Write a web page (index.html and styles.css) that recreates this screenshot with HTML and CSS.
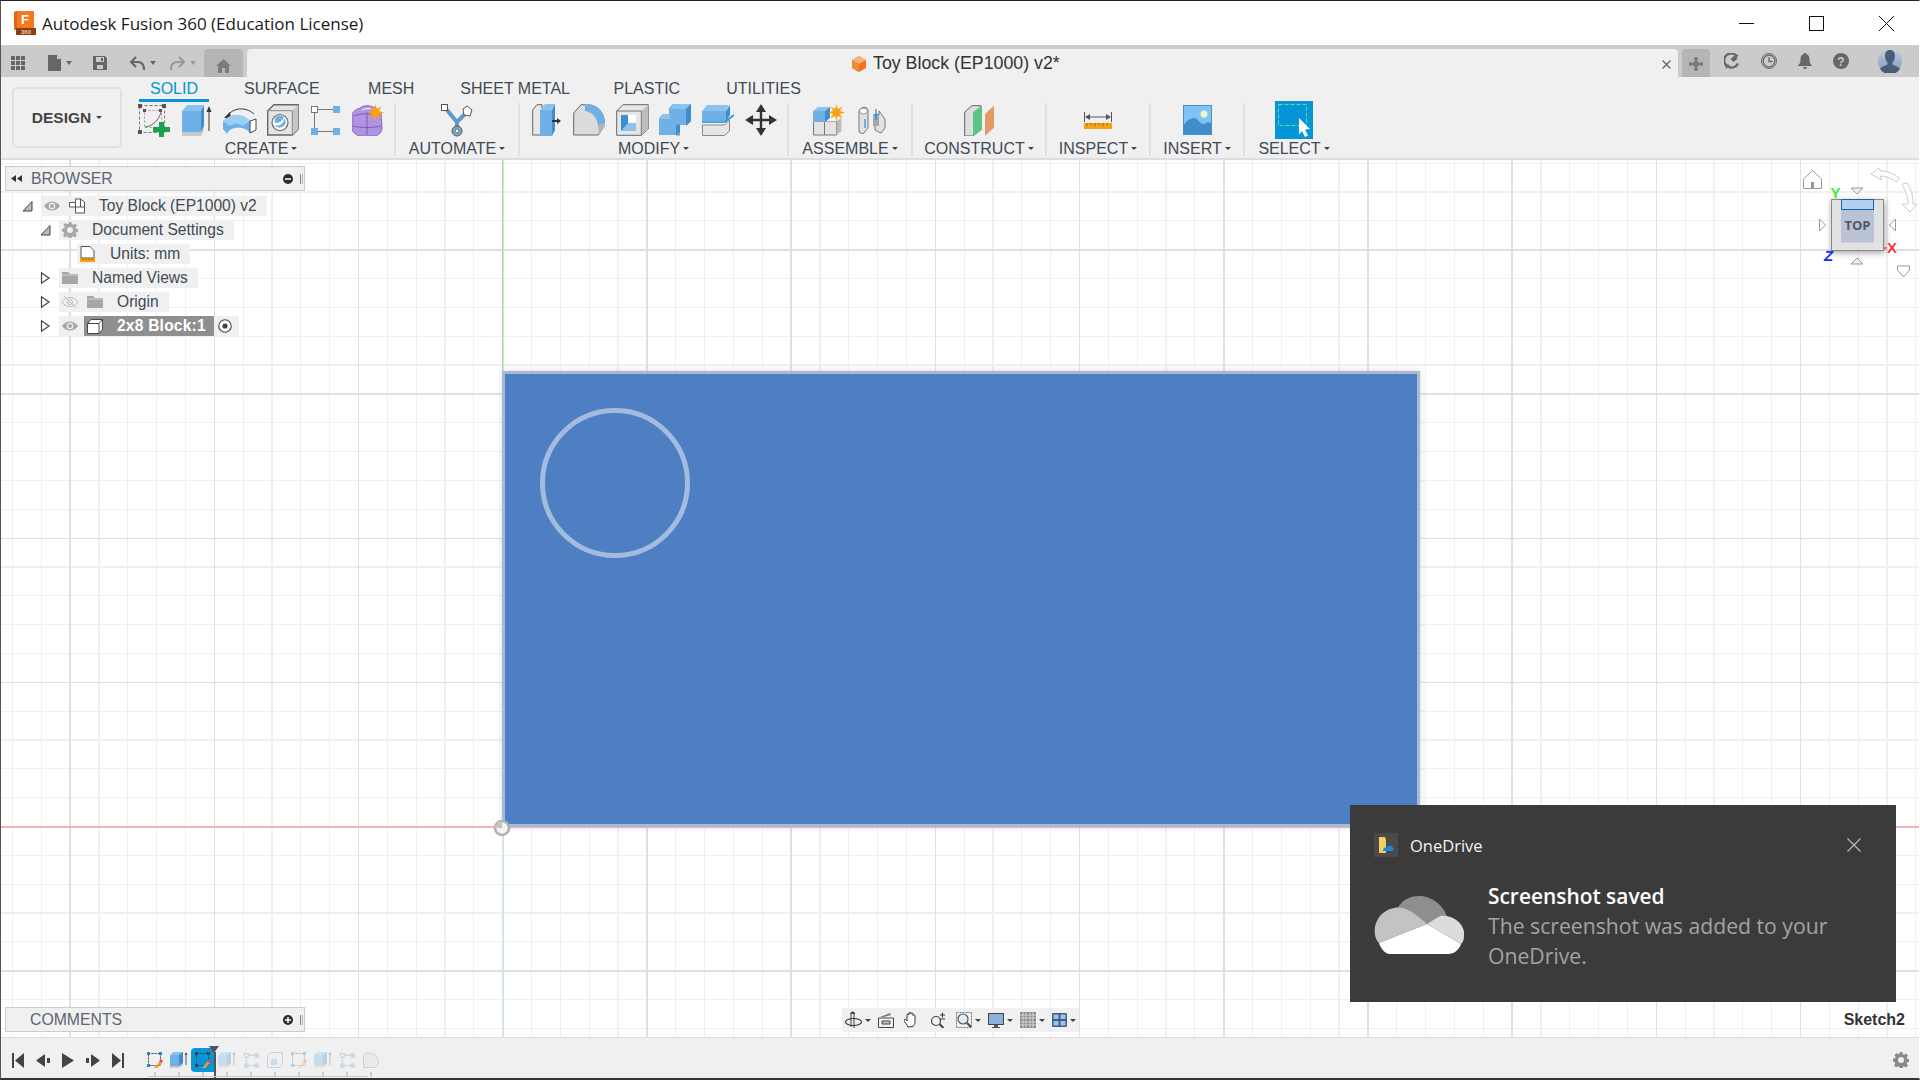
FILE: index.html
```html
<!DOCTYPE html>
<html lang="en">
<head>
    <meta charset="UTF-8">
    <title>Autodesk Fusion 360 (Education License)</title>
    <link rel="stylesheet" href="styles.css">
</head>
<body>
<svg class="defs" width="0" height="0">
    <symbol id="i-sketch" viewBox="0 0 16 16">
        <rect x="1.5" y="1.5" width="12" height="12" fill="none" stroke="currentColor" stroke-dasharray="2 1"/>
        <path d="M0 0h3v3H0zM12 0h3v3h-3zM0 12h3v3H0z" fill="var(--node, #1e88d8)"/>
        <path d="M8 15l5-6 2 2-5 5-3 0z" fill="var(--pen, #f0a030)"/>
        <path d="M12 9l2-2 2 2-2 2z" fill="var(--tip, #e04a4a)"/>
    </symbol>
    <symbol id="i-extrude" viewBox="0 0 18 18">
        <path d="M0 5l4-4h9v12l-4 3H0z" fill="#6fb1e6"/>
        <path d="M0 4l3-3h10l-4 3z" fill="#8cc3ee"/>
        <path d="M9 4l4-3v11l-4 3z" fill="#3f8dcb"/>
        <path d="M0 15h9l4-3v2l-4 3H0z" fill="#c9c9c9"/>
        <path d="M16 2v12" stroke="#555" fill="none"/>
        <path d="M14.500 4L16 1l1.500 3z" fill="#555"/>
    </symbol>
    <symbol id="i-pattern" viewBox="0 0 16 16">
        <path d="M4 2.500h8M2.500 4v8M4 13.500h8" stroke="#777" fill="none"/>
        <rect x="0.500" y="0.500" width="4" height="4" fill="#fff" stroke="#777"/>
        <rect x="11" y="0" width="5" height="5" fill="#6fb1e6"/>
        <rect x="0" y="11" width="5" height="5" fill="#6fb1e6"/>
        <rect x="11" y="11" width="5" height="5" fill="#6fb1e6"/>
    </symbol>
    <symbol id="i-eye" viewBox="0 0 16 10">
        <path d="M0 5c4-6 12-6 16 0-4 6-12 6-16 0z" fill="#a8a8a8"/>
        <circle cx="8" cy="5" r="3.200" fill="#f0f0f0"/>
        <circle cx="8" cy="5" r="2" fill="#a8a8a8"/>
    </symbol>
    <symbol id="i-folder" viewBox="0 0 16 12">
        <path d="M0 0h6l2 2h8v10H0z" fill="#a6a6a6"/>
        <path d="M0 3h16" stroke="#f0f0f0" stroke-width=".6"/>
    </symbol>
    <symbol id="i-tri-open" viewBox="0 0 11 12">
        <path d="M1 11L10 1.500V11z" fill="#bbb" stroke="#444"/>
    </symbol>
    <symbol id="i-tri-closed" viewBox="0 0 11 12">
        <path d="M1.500 .8L9 6l-7.500 5.200z" fill="#fff" stroke="#444" stroke-width="1.200"/>
    </symbol>
    <symbol id="i-gear" viewBox="0 0 16 16">
        <path fill-rule="evenodd" d="M6.600 0h2.800l.4 2.200 1.300.6 1.900-1.300 2 2-1.300 1.900.6 1.300 2.200.4v2.800l-2.200.4-.6 1.300 1.300 1.900-2 2-1.900-1.300-1.300.6-.4 2.200H6.600l-.4-2.200-1.300-.6-1.900 1.300-2-2 1.300-1.900-.6-1.300L0 9.400V6.600l2.200-.4.6-1.300L1.500 3l2-2 1.900 1.300 1.300-.6zM8 5a3 3 0 100 6 3 3 0 000-6z"/>
    </symbol>
    <symbol id="i-star" viewBox="0 0 16 16">
        <polygon points="16,8 11.200,9.300 13.700,13.700 9.300,11.200 8,16 6.700,11.200 2.300,13.700 4.800,9.300 0,8 4.800,6.700 2.300,2.300 6.700,4.800 8,0 9.300,4.800 13.700,2.300 11.200,6.700" fill="#f5a314"/>
    </symbol>
</svg>

<div class="app">
    <header class="titlebar">
        <svg class="app-logo" width="22" height="24" viewBox="0 0 22 24">
            <path d="M2 0h18v18H0V2a2 2 0 012-2z" fill="#f47a20"/>
            <path d="M0 2v17l3 0V0z" fill="#e2661a"/>
            <path d="M2 17h20v7H2z" fill="#8a3f16"/>
            <text x="11" y="13" class="logo-f">F</text>
            <text x="12" y="23" class="logo-360">360</text>
        </svg>
        <span class="app-name">Autodesk Fusion 360 (Education License)</span>
        <div class="win-buttons">
            <svg width="15" height="15" viewBox="0 0 15 15"><path d="M0 7.500h15" stroke="#111"/></svg>
            <svg width="15" height="15" viewBox="0 0 15 15"><rect x=".5" y=".5" width="14" height="14" fill="none" stroke="#111"/></svg>
            <svg width="15" height="15" viewBox="0 0 15 15"><path d="M0 0l15 15M15 0L0 15" stroke="#111"/></svg>
        </div>
    </header>

    <nav class="tabbar">
        <div class="qat">
            <svg width="14" height="14" viewBox="0 0 14 14" fill="#666"><path d="M0 0h4v4H0zM5 0h4v4H5zM10 0h4v4h-4zM0 5h4v4H0zM5 5h4v4H5zM10 5h4v4h-4zM0 10h4v4H0zM5 10h4v4H5zM10 10h4v4h-4z"/></svg>
            <div class="qat-btn">
                <svg width="13" height="16" viewBox="0 0 13 16" fill="#666"><path d="M0 0h9l4 4v12H0z"/><path d="M9 0v4h4z" fill="#cbcbcb"/></svg>
                <i class="caret"></i>
            </div>
            <svg width="14" height="14" viewBox="0 0 14 14"><path d="M0 0h12l2 2v12H0z" fill="#666"/><path d="M3 1h8v5H3zM4 9h6v4H4z" fill="#cbcbcb"/><path d="M8 2h2v3H8z" fill="#666"/></svg>
            <div class="qat-btn">
                <svg width="15" height="15" viewBox="0 0 15 15"><path d="M6 1L1 6l5 5M1 6h7c4 0 6 3 6 8" fill="none" stroke="#666" stroke-width="2.200"/></svg>
                <i class="caret"></i>
            </div>
            <div class="qat-btn faded">
                <svg width="15" height="15" viewBox="0 0 15 15"><path d="M9 1l5 5-5 5M14 6H7C3 6 1 9 1 14" fill="none" stroke="#999" stroke-width="2.200"/></svg>
                <i class="caret light"></i>
            </div>
        </div>
        <div class="home-tab">
            <svg width="15" height="14" viewBox="0 0 15 14" fill="#7c7c7c"><path d="M7.500 0L15 7h-2v7H9V9H6v5H2V7H0z"/></svg>
        </div>
        <div class="doc-tab">
            <div class="doc-name">
                <svg width="14" height="16" viewBox="0 0 14 16"><path d="M7 0l7 4v8l-7 4-7-4V4z" fill="#f37321"/><path d="M7 0l7 4-7 4-7-4z" fill="#f9b27c"/><path d="M0 4l7 4v8l-7-4z" fill="#f08a3c"/></svg>
                <span>Toy Block (EP1000) v2*</span>
            </div>
            <svg class="doc-close" width="9" height="9" viewBox="0 0 9 9"><path d="M.5.5l8 8M8.500.5l-8 8" stroke="#666" stroke-width="1.300"/></svg>
        </div>
        <div class="plus-tab">
            <svg width="14" height="14" viewBox="0 0 14 14"><path d="M7 0v14M0 7h14" stroke="#777" stroke-width="3"/></svg>
        </div>
        <div class="tab-tools">
            <svg width="16" height="16" viewBox="0 0 16 16"><path d="M13 3.500A7 7 0 103 13" fill="none" stroke="#666" stroke-width="2.200"/><path d="M4 13.500a7 7 0 0010-3" fill="none" stroke="#666" stroke-width="2.200"/><path d="M6.500 6l4-3.500 1 1 2-2 1 1-2 2 1 1-2 2-2 1.500z" fill="#666"/><path d="M1 11l5 1-4 4z" fill="#666"/></svg>
            <svg width="16" height="16" viewBox="0 0 16 16"><circle cx="8" cy="8" r="7.500" fill="none" stroke="#666"/><circle cx="8" cy="8" r="5.800" fill="none" stroke="#666" stroke-width="1.300"/><path d="M8 4v4.500h3.500" fill="none" stroke="#666" stroke-width="1.300"/></svg>
            <svg width="14" height="16" viewBox="0 0 14 16" fill="#666"><path d="M7 0c1 0 1.500.6 1.500 1.300C11 2 11.500 4 11.500 7c0 3 1 4 2.500 5.500V13H0v-.5C1.500 11 2.500 10 2.500 7c0-3 .5-5 3-5.700C5.500.6 6 0 7 0z"/><path d="M5 14h4a2 2 0 01-4 0z"/></svg>
            <svg width="16" height="16" viewBox="0 0 16 16"><circle cx="8" cy="8" r="8" fill="#666"/><text x="8" y="12.500" class="help-mark">?</text></svg>
        </div>
        <svg class="avatar" width="24" height="24" viewBox="0 0 24 24">
            <defs><linearGradient id="av" x1="0" y1="0" x2="0" y2="1"><stop offset="0" stop-color="#c0cfe2"/><stop offset="1" stop-color="#7f97b8"/></linearGradient></defs>
            <circle cx="12" cy="12" r="12" fill="url(#av)"/>
            <path d="M12 1c3.500 0 5 2.500 5 6 0 3-1 5-2.500 6.500v2C17 17 21 18 22 20a12 12 0 01-20 0c1-2 5-3 7.500-4.500v-2C8 12 7 10 7 7c0-3.500 1.500-6 5-6z" fill="#4a5d78"/>
        </svg>
    </nav>

    <section class="ribbon">
        <button class="design-btn">DESIGN<i class="caret dark"></i></button>
        <div class="ribbon-main">
            <div class="ribbon-tabs">
                <span class="rtab active">SOLID</span>
                <span class="rtab rtab-surface">SURFACE</span>
                <span class="rtab">MESH</span>
                <span class="rtab rtab-sheet">SHEET METAL</span>
                <span class="rtab">PLASTIC</span>
                <span class="rtab">UTILITIES</span>
            </div>
            <div class="panels">
                <div class="panel p-create">
                    <div class="tools">
                        <div class="tool">
                            <svg width="32" height="33" viewBox="0 0 32 33">
                                <rect x="1.500" y="1.500" width="25" height="27" fill="none" stroke="#777" stroke-dasharray="3 2"/>
                                <rect x="6.500" y="6.500" width="17" height="17" fill="none" stroke="#999" stroke-dasharray="2 2"/>
                                <path d="M7 23c8-1 14-7 16-15" fill="none" stroke="#666"/>
                                <path d="M0 0h4v4H0zM24 0h4v4h-4zM0 26h4v4H0zM5 5h3v3H5zM21 5h3v3h-3z" fill="#555"/>
                                <path d="M21 18h5v5h6v5h-6v5h-5v-5h-6v-5h6z" fill="#1ba34c"/>
                            </svg>
                        </div>
                        <div class="tool">
                            <svg width="30" height="31" viewBox="0 0 30 31">
                                <path d="M0 6h19v21H0z" fill="#6fb1e6"/>
                                <path d="M0 6l5-6h17l-3 6z" fill="#8cc3ee"/>
                                <path d="M19 6l3-6v21l-3 6z" fill="#3f8dcb"/>
                                <path d="M0 27h19l3-6v4l-3 6H0z" fill="#c9c9c9"/>
                                <path d="M27 4v22" stroke="#333"/>
                                <path d="M24.500 7L27 1l2.500 6z" fill="#333"/>
                            </svg>
                        </div>
                        <div class="tool">
                            <svg width="34" height="28" viewBox="0 0 34 28">
                                <path d="M4 10C10 2 22 0 31 8" fill="none" stroke="#333"/>
                                <path d="M1 12l6-6 1 6z" fill="#333"/>
                                <path d="M0 15c8-8 20-8 27 0v12C22 20 7 20 4 28L0 23z" fill="#6fb1e6"/>
                                <path d="M0 15c8-8 20-8 27 0l-7 5c-5-3-9-3-13 0z" fill="#9ccdf2"/>
                                <path d="M27 15l6-2v11l-6 3z" fill="#fff" stroke="#444"/>
                            </svg>
                        </div>
                        <div class="tool">
                            <svg width="32" height="32" viewBox="0 0 32 32">
                                <path d="M.7 6.700L7 .7h24.300v24.300l-6 6H.7z" fill="#e4e4e4" stroke="#666" stroke-width="1.400"/>
                                <path d="M25.300 6.700l6-6v24.300l-6 6z" fill="#c6c6c6"/>
                                <path d="M.7 6.700h24.600v24.300" fill="none" stroke="#888"/>
                                <circle cx="13" cy="18.500" r="8" fill="#fff" stroke="#666" stroke-width="1.200"/>
                                <path d="M7 21a7 7 0 0011 0c1-2 1-5-1-7 0 6-5 9-10 7z" fill="#6fb1e6"/>
                                <path d="M9 13a7 7 0 018 0c-1 3-4 6-9 6-1-2 0-5 1-6z" fill="#6fb1e6"/>
                            </svg>
                        </div>
                        <div class="tool">
                            <svg width="29" height="29" viewBox="0 0 29 29">
                                <path d="M7 3.500h15M3.500 7v15M7 25.500h15" stroke="#777" fill="none"/>
                                <rect x=".5" y=".5" width="6" height="6" fill="#fff" stroke="#777"/>
                                <rect x="22" y="0" width="7" height="7" fill="#6fb1e6"/>
                                <rect x="0" y="22" width="7" height="7" fill="#6fb1e6"/>
                                <rect x="22" y="22" width="7" height="7" fill="#6fb1e6"/>
                            </svg>
                        </div>
                        <div class="tool">
                            <svg width="33" height="32" viewBox="0 0 33 32">
                                <path d="M8 4c5-4 12-2 15 0l6 5 1 15c0 4-3 8-9 8H10c-6 0-10-4-10-8V12c0-4 3-6 8-8z" fill="#b193e4" stroke="#8a68c4"/>
                                <path d="M2 12c6-3 18-3 26 0M15 8v23M1 22c8 2 20 2 28 0" stroke="#7d5ab8" fill="none"/>
                                <path d="M10 6c4-2 8-2 12 0" fill="none" stroke="#fff"/>
                                <svg x="15" y="0" width="17" height="17"><use href="#i-star"/></svg>
                            </svg>
                        </div>
                    </div>
                    <div class="panel-label">CREATE<i class="caret dark"></i></div>
                </div>
                <div class="panel p-automate">
                    <div class="tools">
                        <div class="tool">
                            <svg width="32" height="33" viewBox="0 0 32 33">
                                <path d="M6 6l9 11M27 7l-10 10M16 16v9" stroke="#5a9bd0" stroke-width="4" fill="none"/>
                                <rect x=".5" y=".5" width="6" height="6" fill="#fff" stroke="#555"/>
                                <path d="M26 2l5 4-2 6-6-1-1-6z" fill="#fff" stroke="#555"/>
                                <circle cx="16" cy="27" r="5" fill="#7fa8c8" stroke="#555"/>
                                <circle cx="16" cy="27" r="1.800" fill="#fff" stroke="#555" stroke-width=".7"/>
                            </svg>
                        </div>
                    </div>
                    <div class="panel-label">AUTOMATE<i class="caret dark"></i></div>
                </div>
                <div class="panel p-modify">
                    <div class="tools">
                        <div class="tool">
                            <svg width="29" height="32" viewBox="0 0 29 32">
                                <path d="M.7 31V6L5 .7h5V31z" fill="#e8e8e8" stroke="#666"/>
                                <path d="M8 6h12v26H8z" fill="#6fb1e6"/>
                                <path d="M8 6l5-6h10l-3 6z" fill="#8cc3ee"/>
                                <path d="M20 6l3-6v26l-3 6z" fill="#3f8dcb"/>
                                <path d="M20 17h6" stroke="#333" stroke-width="2"/>
                                <path d="M25 14l4 3-4 3z" fill="#333"/>
                            </svg>
                        </div>
                        <div class="tool">
                            <svg width="32" height="32" viewBox="0 0 32 32">
                                <path d="M.7 31V9L8 .7h6C24 .7 31 8 31.300 18v4l-6 9z" fill="#dcdcdc" stroke="#666"/>
                                <path d="M12 1c9-1 20 7 20 19l-7 3c0-8-6-14-13-15z" fill="#6fb1e6" transform="translate(0 -1)"/>
                                <path d="M25 22l7-3v3l-6 9z" fill="#b5b5b5"/>
                            </svg>
                        </div>
                        <div class="tool">
                            <svg width="33" height="32" viewBox="0 0 33 32">
                                <path d="M.7 7L7 .7h25.300V25l-7 6.300H.7z" fill="#e6e6e6" stroke="#666"/>
                                <path d="M25.300 7l7-6.300V25l-7 6.300z" fill="#bdbdbd"/>
                                <path d="M.7 7h24.600v24" fill="none" stroke="#777"/>
                                <path d="M5 11h15v16H5z" fill="#8cc3ee"/>
                                <path d="M5 11h7v8H5zM5 19h7l-7 8z" fill="#3f8dcb"/>
                                <path d="M12 11h8v8h-8z" fill="#fff"/>
                            </svg>
                        </div>
                        <div class="tool">
                            <svg width="32" height="32" viewBox="0 0 32 32">
                                <path d="M10 4l4-4h18v17l-4 4H21v11l-4-1H0V14l4-4h6z" fill="#6fb1e6"/>
                                <path d="M11 5l4-5h17l-5 5zM0 15l4-5h7v5z" fill="#8cc3ee"/>
                                <path d="M27 5l5-5v17l-5 5zM17 21l4-1v8l-4 4z" fill="#3f8dcb"/>
                            </svg>
                        </div>
                        <div class="tool">
                            <svg width="32" height="31" viewBox="0 0 32 31">
                                <path d="M0 6h24v10H0z" fill="#6fb1e6"/>
                                <path d="M0 6l5-6h22l-3 6z" fill="#8cc3ee"/>
                                <path d="M24 6l4-6v10l-4 6z" fill="#3f8dcb"/>
                                <path d="M.5 20h22l5-5v11l-5 4.500H.5z" fill="#e6e6e6" stroke="#888"/>
                                <path d="M0 17h23l9-7" fill="none" stroke="#1d8ee0" stroke-width="1.600"/>
                            </svg>
                        </div>
                        <div class="tool">
                            <svg width="32" height="32" viewBox="0 0 32 32">
                                <path d="M16 4v24M4 16h24" stroke="#333" stroke-width="2.400"/>
                                <path d="M16 0l5 8H11zM16 32l-5-8h10zM0 16l8-5v10zM32 16l-8 5V11z" fill="#333"/>
                            </svg>
                        </div>
                    </div>
                    <div class="panel-label">MODIFY<i class="caret dark"></i></div>
                </div>
                <div class="panel p-assemble">
                    <div class="tools">
                        <div class="tool">
                            <svg width="32" height="32" viewBox="0 0 32 32">
                                <path d="M.5 17h11v14H.5zM11.500 17h12v14h-12z" fill="#e4e4e4" stroke="#777"/>
                                <path d="M23.500 31l5-4V14l-5 3z" fill="#bdbdbd"/>
                                <path d="M12 17l5-4h11l-5 4z" fill="#f4f4f4"/>
                                <path d="M0 7h12v11H0z" fill="#6fb1e6"/>
                                <path d="M0 7l5-4h12l-5 4z" fill="#8cc3ee"/>
                                <path d="M12 7l5-4v11l-5 4z" fill="#3f8dcb"/>
                                <svg x="15" y="0" width="17" height="17"><use href="#i-star"/></svg>
                            </svg>
                        </div>
                        <div class="tool">
                            <svg width="28" height="28" viewBox="0 0 28 28">
                                <path d="M1 26V6c0-5 9-7 9-1v17l-5 6z" fill="#e2e2e2" stroke="#777"/>
                                <ellipse cx="5.500" cy="5" rx="4" ry="3" fill="#fff" stroke="#777" stroke-width=".8"/>
                                <path d="M17 8v16l6 3 4-5V13l-6-8v4z" fill="#e2e2e2" stroke="#777"/>
                                <path d="M15 10h6v10h-6z" fill="#a8a8a8"/>
                                <path d="M7 13v9M18 3v11M15 9h6" stroke="#1d8ee0" stroke-width="1.200" fill="none"/>
                            </svg>
                        </div>
                    </div>
                    <div class="panel-label">ASSEMBLE<i class="caret dark"></i></div>
                </div>
                <div class="panel p-construct">
                    <div class="tools">
                        <div class="tool">
                            <svg width="30" height="31" viewBox="0 0 30 31">
                                <path d="M.7 31V7L8 .7h9v24L9 31z" fill="#dedede" stroke="#666"/>
                                <path d="M9 7l9-6.500v24L9 31z" fill="#59c685"/>
                                <path d="M21 9l9-8.500v22L21 31z" fill="#e59a66"/>
                            </svg>
                        </div>
                    </div>
                    <div class="panel-label">CONSTRUCT<i class="caret dark"></i></div>
                </div>
                <div class="panel p-inspect">
                    <div class="tools">
                        <div class="tool">
                            <svg width="28" height="17" viewBox="0 0 28 17">
                                <path d="M.5 0v10M27.500 0v10M2 5h24" stroke="#555" fill="none"/>
                                <path d="M1 5l5-3v6zM27 5l-5-3v6z" fill="#555"/>
                                <path d="M0 11h28v6H0z" fill="#f5a314"/>
                                <path d="M3 11v3M7 11v2M11 11v3M15 11v2M19 11v3M23 11v2" stroke="#a86a00"/>
                            </svg>
                        </div>
                    </div>
                    <div class="panel-label">INSPECT<i class="caret dark"></i></div>
                </div>
                <div class="panel p-insert">
                    <div class="tools">
                        <div class="tool">
                            <svg width="29" height="30" viewBox="0 0 29 30">
                                <rect x=".5" y=".5" width="28" height="29" fill="#7fc4f5" stroke="#4a90c8"/>
                                <circle cx="21" cy="9" r="3.500" fill="#f5f5c8"/>
                                <path d="M1 29V20c3-5 7-7 10-7 4 0 6 6 9 6 3 0 5-3 8-1v11z" fill="#3f8dcb"/>
                            </svg>
                        </div>
                    </div>
                    <div class="panel-label">INSERT<i class="caret dark"></i></div>
                </div>
                <div class="panel p-select">
                    <div class="tools">
                        <div class="select-tool">
                            <svg width="38" height="38" viewBox="0 0 38 38">
                                <rect width="38" height="38" fill="#0696d7"/>
                                <rect x="3.500" y="3.500" width="28" height="21" fill="none" stroke="#5fdc9a" stroke-dasharray="4 2"/>
                                <path d="M24 17l11 11-5 .5 3 6-3 1.500-3-6-3 3.500z" fill="#fff"/>
                            </svg>
                        </div>
                    </div>
                    <div class="panel-label">SELECT<i class="caret dark"></i></div>
                </div>
            </div>
        </div>
    </section>

    <main class="canvas">
        <div class="axis-h"></div>
        <div class="axis-v"></div>
        <div class="sketch-block">
            <div class="sketch-circle"></div>
        </div>
        <svg class="origin" width="20" height="20" viewBox="0 0 20 20">
            <circle cx="10" cy="10" r="7" fill="#f4f4f4" stroke="#b0b0b0" stroke-width="2.500"/>
            <path d="M10 10V3A7 7 0 003 10z" fill="#c4c4c4"/>
        </svg>

        <aside class="browser">
            <div class="panel-head">
                <svg width="11" height="7" viewBox="0 0 11 7" fill="#333"><path d="M5 0v7L0 3.500zM11 0v7L6 3.500z"/></svg>
                <span class="panel-head-title">BROWSER</span>
                <svg class="head-pin" width="10" height="10" viewBox="0 0 10 10"><circle cx="5" cy="5" r="5" fill="#2b2b2b"/><path d="M2 5h6" stroke="#fff" stroke-width="1.500"/></svg>
                <i class="head-grip"></i>
            </div>
            <div class="tree">
                <div class="tree-row lvl-0">
                    <svg class="tri" width="11" height="12"><use href="#i-tri-open"/></svg>
                    <div class="row-body">
                        <svg class="eye" width="16" height="10"><use href="#i-eye"/></svg>
                        <svg class="node-icon" width="16" height="16" viewBox="0 0 16 16"><path d="M.5 4.500h6V1h5l4 3v11h-9V9H.5z" fill="#fff" stroke="#555"/><path d="M6.500 9h9M6.500 4.500V9M11.500 1v8" fill="none" stroke="#555"/></svg>
                        <span>Toy Block (EP1000) v2</span>
                    </div>
                </div>
                <div class="tree-row lvl-1">
                    <svg class="tri" width="11" height="12"><use href="#i-tri-open"/></svg>
                    <div class="row-body">
                        <svg class="node-icon grey-icon" width="16" height="16"><use href="#i-gear"/></svg>
                        <span>Document Settings</span>
                    </div>
                </div>
                <div class="tree-row lvl-2">
                    <span class="tri-space"></span>
                    <div class="row-body">
                        <svg class="node-icon" width="15" height="16" viewBox="0 0 15 16"><path d="M1 .5h9l4 4V12H1z" fill="#fff" stroke="#555"/><path d="M0 12h15v4H0z" fill="#f5a314"/><path d="M3 12v2M6 12v2M9 12v2M12 12v2" stroke="#8a5a00"/></svg>
                        <span>Units: mm</span>
                    </div>
                </div>
                <div class="tree-row lvl-1">
                    <svg class="tri" width="11" height="12"><use href="#i-tri-closed"/></svg>
                    <div class="row-body">
                        <svg class="node-icon" width="16" height="12"><use href="#i-folder"/></svg>
                        <span>Named Views</span>
                    </div>
                </div>
                <div class="tree-row lvl-1">
                    <svg class="tri" width="11" height="12"><use href="#i-tri-closed"/></svg>
                    <div class="row-body">
                        <svg class="eye" width="16" height="12" viewBox="0 0 16 12"><path d="M0 6c4-6 12-6 16 0-4 6-12 6-16 0z" fill="none" stroke="#bbb"/><circle cx="8" cy="6" r="2.500" fill="none" stroke="#bbb"/><path d="M2 0l12 12" stroke="#bbb"/></svg>
                        <svg class="node-icon" width="16" height="12"><use href="#i-folder"/></svg>
                        <span>Origin</span>
                    </div>
                </div>
                <div class="tree-row lvl-1">
                    <svg class="tri" width="11" height="12"><use href="#i-tri-closed"/></svg>
                    <div class="row-body row-active">
                        <svg class="eye-tight" width="16" height="10"><use href="#i-eye"/></svg>
                        <div class="row-selected">
                            <svg class="node-icon" width="16" height="15" viewBox="0 0 16 15"><path d="M.5 4.500L4 .5h11.500v10L12 14.500H.5z" fill="#fff" stroke="#444"/><path d="M.5 4.500H12v10M12 4.500L15.500.5" fill="none" stroke="#444"/></svg>
                            <span>2x8 Block:1</span>
                        </div>
                        <svg class="radio" width="14" height="14" viewBox="0 0 14 14"><circle cx="7" cy="7" r="6.200" fill="#fff" stroke="#444" stroke-width="1.100"/><circle cx="7" cy="7" r="2.600" fill="#444"/></svg>
                    </div>
                </div>
            </div>
        </aside>

        <svg class="viewcube" width="120" height="115" viewBox="0 0 120 115">
            <g fill="#fff" stroke="#999">
                <path d="M3.500 14L12.500 5.500 21.500 14V23.500H3.500z"/>
                <path d="M11 23.500V17h3v6.500z" fill="#999" stroke="none"/>
                <path d="M71 9l8-6 1.500 3c6 0 12 2 19 7l-3 4c-6-4-11-6-16-6l1 4z" stroke="#ccc"/>
                <path d="M102 19l5-1c4 6 6 12 6 21l4 0-7 8-8-8h6c0-7-2-12-6-20z" stroke="#ccc"/>
                <path d="M51 23h12l-6 6z" fill="#eee"/>
                <path d="M19.500 54v12l6-6z" fill="#fff"/>
                <path d="M95.500 54v12l-6-6z" fill="#fff"/>
                <path d="M51 99h12l-6-6z" fill="#eee"/>
                <path d="M97.500 101h12l0 4-6 7-6-7z"/>
            </g>
            <rect class="cube-face" x="31.500" y="34.500" width="52" height="51" fill="#e2e2e2" stroke="#888"/>
            <rect x="41" y="34.500" width="33" height="43" fill="#bac3d3"/>
            <rect x="41.500" y="34.500" width="32" height="10" fill="#b0d2f0" stroke="#1a62b0"/>
            <text x="57.500" y="65" class="cube-top">TOP</text>
            <text x="35.500" y="33" class="axis-y">Y</text>
            <text x="92" y="88" class="axis-x">X</text>
            <path d="M84 83h3" stroke="#f44" stroke-width="1.500"/>
            <text x="28.500" y="96" class="axis-z">Z</text>
        </svg>

        <div class="nav-bar">
            <div class="nav-item">
                <svg width="17" height="18" viewBox="0 0 17 18"><path d="M9 1v16M6 3v13" stroke="#444" fill="none"/><path d="M7.500 0l3 3h-6z" fill="#444"/><ellipse cx="8.500" cy="11" rx="8" ry="3.500" fill="none" stroke="#333" stroke-width="1.100"/></svg>
                <i class="caret dark"></i>
            </div>
            <div class="nav-item">
                <svg width="16" height="16" viewBox="0 0 16 16"><path d="M.5 6h15v9.500H.5z" fill="#f0f0f0" stroke="#444"/><path d="M4 9h8v3H4z" fill="#b8c8dc" stroke="#444"/><path d="M2 5l10-4 1 2-7 2z" fill="#777"/></svg>
            </div>
            <div class="nav-item wide">
                <svg width="16" height="16" viewBox="0 0 16 16"><path d="M4 15c-1-3-4-5-4-7 0-1 2-1 3 1V3c0-1.500 2-1.500 2 0V1c0-1.300 2-1.300 2 0v1c0-1.300 2-1.300 2 0v1.500c0-1.300 2-1 2 .5v6c0 2-1 3-2 4.500z" fill="#fff" stroke="#333"/></svg>
            </div>
            <div class="nav-item wide">
                <svg width="16" height="16" viewBox="0 0 16 16"><circle cx="6" cy="9" r="4.500" fill="#e8f0f8" stroke="#444" stroke-width="1.200"/><path d="M9.500 12l4 4" stroke="#444" stroke-width="2"/><path d="M10 3h5M12.500 .5v5M10 7h5" stroke="#333" fill="none"/></svg>
            </div>
            <div class="nav-item wide">
                <svg width="16" height="16" viewBox="0 0 16 16"><rect x=".5" y=".5" width="15" height="15" fill="none" stroke="#777" stroke-dasharray="2 1"/><circle cx="7" cy="7" r="5" fill="#e4eef6" stroke="#555" stroke-width="1.200"/><path d="M11 11l4 4" stroke="#444" stroke-width="2"/></svg>
                <i class="caret dark"></i>
            </div>
            <div class="nav-item">
                <svg width="16" height="15" viewBox="0 0 16 15"><rect x=".5" y=".5" width="15" height="11" fill="#8eb0dc" stroke="#444"/><path d="M6 12h4v2h2v1H4v-1h2z" fill="#555"/></svg>
                <i class="caret dark"></i>
            </div>
            <div class="nav-item">
                <svg width="16" height="16" viewBox="0 0 16 16"><rect width="16" height="16" fill="#8a8a8a"/><path d="M3 0v16M6 0v16M10 0v16M13 0v16M0 3h16M0 6h16M0 10h16M0 13h16" stroke="#e6e6e6" stroke-width=".8"/></svg>
                <i class="caret dark"></i>
            </div>
            <div class="nav-item">
                <svg width="15" height="14" viewBox="0 0 15 14"><rect width="15" height="14" rx="1" fill="#3f5f8a"/><path d="M1.500 1.500h5v4.500h-5zM8.500 1.500h5v4.500h-5zM1.500 8h5v4.500h-5zM8.500 8h5v4.500h-5z" fill="#9cc0e6"/></svg>
                <i class="caret dark"></i>
            </div>
        </div>

        <div class="comments-panel">
            <span class="panel-head-title">COMMENTS</span>
            <svg class="head-pin" width="10" height="10" viewBox="0 0 10 10"><circle cx="5" cy="5" r="5" fill="#2b2b2b"/><path d="M2 5h6M5 2v6" stroke="#fff" stroke-width="1.500"/></svg>
            <i class="head-grip"></i>
        </div>

        <div class="sketch-name">Sketch2</div>

        <div class="toast">
            <div class="toast-head">
                <div class="toast-app">
                    <svg width="16" height="16" viewBox="0 0 16 16"><path d="M1 0h6l1 3v13H1z" fill="#f2cf62"/><path d="M5 14c0-3 2-4 4-4 1-2 5-2 6 1 1 1 1 3-1 3z" fill="#1e88d8"/></svg>
                </div>
                <span class="toast-name">OneDrive</span>
                <svg class="toast-close" width="14" height="14" viewBox="0 0 14 14"><path d="M.5.5l13 13M13.500.5l-13 13" stroke="#bdbdbd" stroke-width="1.100"/></svg>
            </div>
            <div class="toast-body">
                <svg width="90" height="58" viewBox="0 0 90 58" class="toast-cloud">
                    <path d="M22 16C26 4 36 0 45 0c12 0 24 8 28 21L53 28z" fill="#8e8e8e"/>
                    <path d="M5 47C-3 40-1 16 20 12c10-2 18 3 33 16z" fill="#c3c3c3"/>
                    <path d="M53 28l13-8c12-2 26 8 24 20 0 4-1 6-3 8z" fill="#dcdcdc"/>
                    <path d="M5 47l48-19 34 20c-2 6-7 10-13 10H16c-5 0-9-5-11-11z" fill="#fff"/>
                </svg>
                <div class="toast-text">
                    <div class="toast-title">Screenshot saved</div>
                    <div class="toast-msg">The screenshot was added to your<br>OneDrive.</div>
                </div>
            </div>
        </div>
    </main>

    <footer class="timeline">
        <div class="player">
            <span class="play-btn"><svg width="12" height="15" viewBox="0 0 12 15" fill="#444"><path d="M0 0h2v15H0zM12 0v15L3 7.500z"/></svg></span>
            <span class="play-btn"><svg width="14" height="13" viewBox="0 0 14 13" fill="#444"><path d="M9 0v13L0 6.500zM11 4h3v5h-3z"/></svg></span>
            <span class="play-btn"><svg width="12" height="15" viewBox="0 0 12 15" fill="#444"><path d="M0 0l12 7.500L0 15z"/></svg></span>
            <span class="play-btn"><svg width="14" height="13" viewBox="0 0 14 13" fill="#444"><path d="M5 0v13l9-6.500zM0 4h3v5H0z"/></svg></span>
            <span class="play-btn"><svg width="12" height="15" viewBox="0 0 12 15" fill="#444"><path d="M10 0h2v15h-2zM0 0v15l9-7.500z"/></svg></span>
        </div>
        <div class="track">
            <div class="step"><svg width="16" height="16" class="step-dark"><use href="#i-sketch"/></svg></div>
            <div class="step"><svg width="18" height="18"><use href="#i-extrude"/></svg></div>
            <div class="step current"><svg width="16" height="16" class="step-dark"><use href="#i-sketch"/></svg></div>
            <div class="step off"><svg width="18" height="18"><use href="#i-extrude"/></svg></div>
            <div class="step off"><svg width="15" height="15"><use href="#i-pattern"/></svg></div>
            <div class="step off">
                <svg width="16" height="16" viewBox="0 0 16 16"><path d="M.5 3.500l3-3h12v12l-3 3H.5z" fill="#eee" stroke="#888"/><path d="M4 7h6v6H4z" fill="#6fb1e6"/></svg>
            </div>
            <div class="step off"><svg width="16" height="16" class="step-dark"><use href="#i-sketch"/></svg></div>
            <div class="step off"><svg width="18" height="18"><use href="#i-extrude"/></svg></div>
            <div class="step off"><svg width="15" height="15"><use href="#i-pattern"/></svg></div>
            <div class="step off">
                <svg width="16" height="16" viewBox="0 0 16 16"><path d="M.5 15.500V4L3 1h4c5 0 8 4 8.500 9v2l-3 3.500z" fill="#ddd" stroke="#888"/></svg>
            </div>
            <div class="marker"></div>
        </div>
        <svg class="timeline-gear" width="16" height="16"><use href="#i-gear"/></svg>
    </footer>
</div>
</body>
</html>
```

FILE: styles.css
```css
* {
    box-sizing: border-box;
}
body {
    margin: 0;
    width: 1920px;
    height: 1080px;
    overflow: hidden;
    background: #fff;
    font-family: "Liberation Sans", Arial, sans-serif;
    color: #3f4a55;
}
svg {
    display: block;
    flex: none;
}
.defs {
    position: absolute;
}
.app {
    display: flex;
    flex-direction: column;
    height: 1080px;
    border-top: 1px solid #222;
    border-left: 1px solid #555;
    border-right: 1px solid #fff;
    border-bottom: 2px solid #333;
}
.caret {
    display: block;
    flex: none;
    width: 0;
    height: 0;
    border-left: 3.500px solid transparent;
    border-right: 3.500px solid transparent;
    border-top: 4px solid #666;
}
.caret.light {
    border-top-color: #999;
}
.caret.dark {
    border-left-width: 3px;
    border-right-width: 3px;
    border-top-width: 3px;
    border-top-color: #444;
}

/* title bar */
.titlebar {
    display: flex;
    align-items: center;
    height: 44px;
    padding-left: 13px;
    flex: none;
}
.app-name {
    margin-left: 6px;
    font-family: "Open Sans", sans-serif;
    font-size: 17px;
    color: #1a1a1a;
}
.logo-f {
    font: bold 13px "Liberation Sans", sans-serif;
    fill: #fff;
    text-anchor: middle;
}
.logo-360 {
    font: bold 6px "Liberation Sans", sans-serif;
    fill: #f0c8a0;
    text-anchor: middle;
}
.win-buttons {
    display: flex;
    gap: 55px;
    margin-left: auto;
    padding-right: 25px;
}

/* tab strip */
.tabbar {
    display: flex;
    flex: none;
    height: 32px;
    padding-top: 4px;
    background: #cbcbcb;
}
.qat {
    display: grid;
    grid-template-columns: 37px 45px 37px 40px 33px;
    align-items: center;
    width: 203px;
    padding-left: 10px;
}
.qat-btn {
    display: flex;
    align-items: center;
    gap: 5px;
}
.home-tab {
    display: flex;
    justify-content: center;
    align-items: center;
    width: 39px;
    padding-top: 6px;
    background: #b5b5b5;
    border-radius: 4px 4px 0 0;
}
.doc-tab {
    display: flex;
    align-items: center;
    width: 1431px;
    margin-left: 4px;
    padding: 0 7px 0 605px;
    background: #f0f0f0;
    border-radius: 4px 4px 0 0;
}
.doc-name {
    display: flex;
    align-items: center;
    gap: 7px;
    font-size: 17.800px;
    color: #333;
    margin-top: 1px;
}
.doc-close {
    margin-left: auto;
    margin-top: 2px;
}
.plus-tab {
    display: flex;
    justify-content: center;
    align-items: center;
    width: 28px;
    margin-left: 4px;
    padding-top: 2px;
    background: #b5b5b5;
    border-radius: 4px 4px 0 0;
}
.tab-tools {
    display: flex;
    align-items: center;
    gap: 21px;
    margin-left: 14px;
    margin-top: -4px;
}
.avatar {
    margin-left: 29px;
}

/* ribbon */
.ribbon {
    display: flex;
    flex: none;
    height: 83px;
    padding-left: 11px;
    background: #f0f0f0;
    border-bottom: 2px solid #ddd;
}
.design-btn {
    width: 110px;
    height: 61px;
    margin: 10px 10px 0 0;
    display: flex;
    justify-content: center;
    align-items: center;
    gap: 5px;
    padding: 0;
    background: #f0f0f0;
    border: 2px solid #e0e0e0;
    border-radius: 5px;
    font: bold 15.500px "Liberation Sans", sans-serif;
    color: #444;
}
.ribbon-tabs {
    display: flex;
    gap: 24px;
    height: 26px;
    padding-left: 7px;
}
.rtab {
    height: 25px;
    padding: 0 11px;
    font-size: 16px;
    line-height: 24px;
    white-space: nowrap;
}
.rtab-surface {
    margin-right: 2.500px;
}
.rtab-sheet {
    margin-right: -2.500px;
}
.rtab.active {
    color: #0696d7;
    border-bottom: 3px solid #0696d7;
}
.panels {
    display: flex;
}
.panel {
    display: flex;
    flex-direction: column;
    align-items: center;
    height: 53px;
    border-right: 2px solid #e0e0e0;
}
.p-create { width: 264px; padding-right: 4px; }
.p-automate { width: 124px; }
.p-modify { width: 269px; }
.p-assemble { width: 124px; }
.p-construct { width: 134px; }
.p-inspect { width: 104px; }
.p-insert { width: 94px; }
.p-select { width: 98px; border-right: 0; }
.tools {
    display: flex;
    align-items: center;
    height: 34px;
}
.tool {
    display: flex;
    justify-content: center;
    align-items: center;
    width: 43px;
    height: 34px;
}
.panel-label {
    display: flex;
    align-items: center;
    gap: 3px;
    height: 17px;
    margin-top: 3px;
    font-size: 16px;
    white-space: nowrap;
}

/* canvas and what lies over it */
.canvas {
    position: relative;
    flex: 1;
    overflow: hidden;
    background-color: #fff;
    background-image:
        repeating-linear-gradient(90deg, transparent 0, transparent 68.400px, #e0e0e0 68.400px, #e0e0e0 69.900px, transparent 69.900px, transparent 144.200px),
        repeating-linear-gradient(180deg, transparent 0, transparent 89.200px, #e0e0e0 89.200px, #e0e0e0 90.700px, transparent 90.700px, transparent 144.200px),
        repeating-linear-gradient(90deg, transparent 0, transparent 10.800px, #f0f0f0 10.800px, #f0f0f0 12px, transparent 12px, transparent 28.840px),
        repeating-linear-gradient(180deg, transparent 0, transparent 2.600px, #f0f0f0 2.600px, #f0f0f0 3.800px, transparent 3.800px, transparent 28.840px);
}
.axis-h {
    position: absolute;
    left: 0;
    right: 0;
    top: 666px;
    height: 1.500px;
    background: #f4b4b4;
}
.axis-v {
    position: absolute;
    left: 501px;
    top: 0;
    bottom: 0;
    width: 1px;
    background: linear-gradient(180deg, #84e884 666px, #c8f2c8 666px);
}
.sketch-block {
    position: absolute;
    left: 501px;
    top: 211px;
    width: 918px;
    height: 456px;
    background: #4f7fc3;
    border: 3px solid #a6bbd9;
    border-top-color: #a9b8cc;
    box-shadow: 0 0 6px rgba(190, 190, 200, 0.6);
}
.sketch-circle {
    position: absolute;
    left: 35px;
    top: 34px;
    width: 150px;
    height: 150px;
    border: 5.500px solid #a3bbdf;
    border-radius: 50%;
}
.origin {
    position: absolute;
    left: 491px;
    top: 658px;
}
.browser {
    position: absolute;
    left: 4px;
    top: 6px;
    width: 300px;
}
.panel-head,
.comments-panel {
    display: flex;
    align-items: center;
    height: 25px;
    background: #f0f0f0;
    border: 1px solid #ccc;
    padding-left: 5px;
}
.panel-head-title {
    margin-left: 9px;
    font-size: 15.800px;
    color: #5c6670;
}
.head-pin {
    margin-left: auto;
}
.head-grip {
    display: block;
    width: 3px;
    height: 10px;
    margin: 0 1px 0 7px;
    border-left: 1px solid #888;
    border-right: 1px solid #bbb;
}
.tree {
    padding-top: 5px;
}
.tree-row {
    display: flex;
    align-items: center;
    height: 20px;
    margin-bottom: 4px;
    font-size: 15.600px;
    white-space: nowrap;
}
.lvl-0 { padding-left: 17px; }
.lvl-1 { padding-left: 35px; }
.lvl-2 { padding-left: 53px; }
.tri,
.tri-space {
    width: 11px;
    margin-right: 8px;
}
.row-body {
    display: flex;
    align-items: center;
    height: 20px;
    padding: 0 10px 0 3px;
    background: #f0f0f0;
}
.lvl-2 .node-icon {
    margin-right: 15px;
}
.eye {
    margin-right: 9px;
}
.eye-tight {
    margin-right: 6px;
}
.node-icon {
    margin-right: 14px;
}
.grey-icon {
    fill: #a8a8a8;
}
.row-active {
    padding-right: 7px;
}
.row-selected {
    display: flex;
    align-items: center;
    height: 20px;
    padding: 0 8px 0 3px;
    background: #8f8f8f;
    color: #fff;
    font-weight: bold;
    letter-spacing: 0.200px;
}
.radio {
    margin-left: 4px;
}
.viewcube {
    position: absolute;
    left: 1799px;
    top: 5px;
}
.cube-face {
    filter: drop-shadow(1px 2px 3px rgba(0, 0, 0, 0.35));
}
.cube-top {
    font: bold 13px "Open Sans", sans-serif;
    fill: #4f566a;
    text-anchor: middle;
}
.axis-y {
    font: bold 15px "Liberation Sans", sans-serif;
    fill: #3ee83e;
    text-anchor: middle;
}
.axis-x {
    font: bold 15px "Liberation Sans", sans-serif;
    fill: #ff3b3b;
    text-anchor: middle;
}
.axis-z {
    font: italic bold 15px "Liberation Sans", sans-serif;
    fill: #1a2cf0;
    text-anchor: middle;
}
.help-mark {
    font: bold 12px "Liberation Sans", sans-serif;
    fill: #cbcbcb;
    text-anchor: middle;
}
.nav-bar {
    position: absolute;
    left: 841px;
    bottom: 5px;
    display: flex;
    align-items: center;
    gap: 7px;
    width: 237px;
    height: 24px;
    padding-left: 3px;
    background: #f0f0f0;
}
.nav-item {
    display: flex;
    align-items: center;
    gap: 3px;
}
.nav-item.wide {
    margin-left: 3px;
}
.comments-panel {
    position: absolute;
    left: 4px;
    bottom: 5px;
    width: 300px;
    padding-left: 15px;
}
.sketch-name {
    position: absolute;
    right: 14px;
    bottom: 8px;
    font-size: 16px;
    font-weight: bold;
    color: #333;
}

/* notification */
.toast {
    position: absolute;
    left: 1349px;
    top: 645px;
    width: 546px;
    height: 197px;
    padding: 28px 35px 0 24px;
    background: #3b3b3b;
    font-family: "Open Sans", sans-serif;
}
.toast-head {
    display: flex;
    align-items: center;
    height: 24px;
}
.toast-app {
    display: flex;
    justify-content: center;
    align-items: center;
    width: 24px;
    height: 24px;
    background: #4a4a4a;
}
.toast-name {
    margin-left: 12px;
    font-size: 16.500px;
    color: #f2f2f2;
}
.toast-close {
    margin-left: auto;
}
.toast-body {
    display: flex;
    gap: 24px;
    margin-top: 24px;
}
.toast-cloud {
    margin-top: 15px;
}
.toast-title {
    font-size: 20.900px;
    line-height: 30px;
    font-weight: 600;
    color: #fff;
}
.toast-msg {
    font-size: 21.200px;
    line-height: 30px;
    color: #a3a3a3;
}

/* timeline */
.timeline {
    position: relative;
    display: flex;
    flex: none;
    height: 41px;
    padding: 10px 10px 0 4px;
    background: #f0f0f0;
    border-top: 1px solid #ddd;
}
.player {
    display: flex;
    height: 24px;
}
.play-btn {
    display: flex;
    justify-content: center;
    align-items: center;
    width: 25px;
}
.track {
    position: relative;
    display: flex;
    margin-left: 13px;
    height: 24px;
}
.track::after {
    content: "";
    position: absolute;
    left: 5px;
    right: 15px;
    top: 28px;
    height: 1px;
    background: #ccc;
}
.step {
    position: relative;
    display: flex;
    justify-content: center;
    align-items: center;
    width: 24px;
    height: 24px;
    color: #444;
}
.step::after {
    content: "";
    position: absolute;
    left: 11px;
    top: 24px;
    width: 1.500px;
    height: 5px;
    background: #ccc;
}
.step.current {
    background: #0696d7;
    border-radius: 4px 0 0 4px;
    --node: #444;
}
.step.off svg {
    opacity: 0.3;
}
.marker {
    position: absolute;
    left: 66px;
    top: -2px;
    width: 11px;
    height: 32px;
}
.marker::before {
    content: "";
    display: block;
    width: 0;
    height: 0;
    border-left: 5.500px solid transparent;
    border-right: 5.500px solid transparent;
    border-top: 7px solid #555;
}
.marker::after {
    content: "";
    position: absolute;
    left: 4.500px;
    top: 6px;
    width: 2px;
    height: 26px;
    background: #555;
}
.timeline-gear {
    margin-left: auto;
    margin-top: 4px;
    fill: #8a8a8a;
}
```
